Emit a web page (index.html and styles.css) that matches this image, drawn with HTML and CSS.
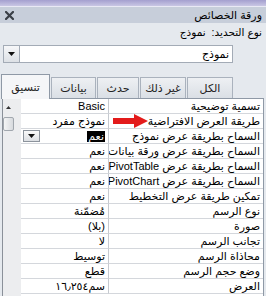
FILE: index.html
```html
<!DOCTYPE html>
<html lang="ar" dir="rtl">
<head>
<meta charset="utf-8">
<title>ورقة الخصائص</title>
<link rel="stylesheet" href="styles.css">
</head>
<body>
<div class="panel">
  <div class="topband"></div>
  <div class="titlebar">
    <span class="title">ورقة الخصائص</span>
    <span class="close"><svg width="9" height="9" viewBox="0 0 9 9"><path d="M1 1L8 8M8 1L1 8" stroke="#3a3f47" stroke-width="2.2" stroke-linecap="square"/></svg></span>
  </div>
  <div class="seltype">نوع التحديد:&nbsp; نموذج</div>
  <div class="combo">
    <span class="combo-text">نموذج</span>
    <span class="combo-btn"><svg width="7" height="4" viewBox="0 0 7 4"><path d="M0 0H7L3.5 4Z" fill="#111"/></svg></span>
  </div>
  <div class="tabs">
    <div class="tab">الكل</div>
    <div class="tab">غير ذلك</div>
    <div class="tab">حدث</div>
    <div class="tab">بيانات</div>
    <div class="tab active">تنسيق</div>
  </div>
  <div class="sheet">
    <div class="props">
      <div class="cell name">تسمية توضيحية</div><div class="cell val">Basic</div>
      <div class="cell name">طريقة العرض الافتراضية</div><div class="cell val">نموذج مفرد</div>
      <div class="cell name">السماح بطريقة عرض نموذج</div><div class="cell val sel"><span class="hl">نعم</span><span class="drop"><svg width="7" height="4" viewBox="0 0 7 4"><path d="M0 0H7L3.5 4Z" fill="#111"/></svg></span></div>
      <div class="cell name">السماح بطريقة عرض ورقة بيانات</div><div class="cell val">نعم</div>
      <div class="cell name">السماح بطريقة عرض PivotTable</div><div class="cell val">نعم</div>
      <div class="cell name">السماح بطريقة عرض PivotChart</div><div class="cell val">نعم</div>
      <div class="cell name">تمكين طريقة عرض التخطيط</div><div class="cell val">نعم</div>
      <div class="cell name">نوع الرسم</div><div class="cell val">مُضمّنة</div>
      <div class="cell name">صورة</div><div class="cell val">(بلا)</div>
      <div class="cell name">تجانب الرسم</div><div class="cell val">لا</div>
      <div class="cell name">محاذاة الرسم</div><div class="cell val">توسيط</div>
      <div class="cell name">وضع حجم الرسم</div><div class="cell val">قطع</div>
      <div class="cell name">العرض</div><div class="cell val">سم١٦٫٢٥٤</div>
    </div>
    <div class="scroll">
      <span class="up"><svg width="5" height="3" viewBox="0 0 5 3"><path d="M0 3H5L2.5 0Z" fill="#333"/></svg></span>
      <span class="thumb"></span>
    </div>
    <svg class="arrow" width="36" height="14" viewBox="0 0 36 14"><path d="M0 4H21V0L35 7L21 14V10H0Z" fill="#e31b1b"/></svg>
  </div>
</div>
</body>
</html>
```
FILE: styles.css
```css
html, body {
  margin: 0;
  padding: 0;
}
body {
  width: 266px;
  height: 296px;
  overflow: hidden;
  background: #e5e9ee;
  font-family: "Liberation Sans", "DejaVu Sans", sans-serif;
  font-size: 11px;
  color: #000;
}
.panel {
  direction: rtl;
  display: flex;
  flex-direction: column;
  height: 296px;
}
.topband {
  height: 6px;
  background: linear-gradient(#a49fcf, #c9c6e4);
  border-bottom: 1px solid #e9e9f4;
}
.titlebar {
  height: 16px;
  background: #c7ceda;
  display: flex;
  justify-content: space-between;
  align-items: center;
  padding: 0 4px 0 5px;
}
.title {
  font-size: 11px;
  line-height: 16px;
}
.close {
  display: flex;
}
.seltype {
  height: 19px;
  line-height: 19px;
  padding-right: 4px;
  font-size: 10.5px;
}
.combo {
  margin-top: 3px;
  margin-right: 33px;
  width: 230px;
  height: 18px;
  box-sizing: border-box;
  border: 1px solid #a3abb6;
  background: #fff;
  display: flex;
  justify-content: space-between;
  align-items: center;
}
.combo-text {
  padding-right: 3px;
  line-height: 16px;
}
.combo-btn {
  width: 16px;
  height: 16px;
  box-sizing: border-box;
  border-right: 1px solid #a3abb6;
  background: linear-gradient(#f6f7f9, #dde1e6);
  display: flex;
  align-items: center;
  justify-content: center;
}
.tabs {
  margin-top: 10px;
  height: 25px;
  display: flex;
  align-items: flex-end;
  padding-right: 33px;
  gap: 1px;
}
.tab {
  height: 21px;
  box-sizing: border-box;
  border: 1px solid #aab2bd;
  border-bottom: none;
  background: linear-gradient(#eef0f3, #dadfe5);
  display: flex;
  align-items: center;
  justify-content: center;
  width: 46px;
  color: #222;
}
.tab:nth-child(3) { width: 42px; }
.tab:nth-child(4) { width: 45px; }
.tab.active {
  height: 25px;
  width: 49px;
  background: #f5f6f8;
  border-color: #8f99a6;
  margin-bottom: -1px;
  position: relative;
  z-index: 1;
  padding-top: 1px;
}
.sheet {
  position: relative;
  margin: 0 2px;
  border-top: 1px solid #8f99a6;
  border-right: 1px solid #8f99a6;
  display: flex;
  flex: 1;
  min-height: 0;
}
.props {
  display: grid;
  grid-template-columns: 155px 87px;
  grid-auto-rows: 15px;
  width: 242px;
  background: #fff;
}
.cell {
  box-sizing: border-box;
  border-bottom: 1px solid #d4d7dc;
  line-height: 14px;
  padding-right: 3px;
  white-space: nowrap;
  overflow: hidden;
}
.name {
  border-left: 1px solid #c6cad0;
}
.val {
  position: relative;
}
.sel {
  display: flex;
  justify-content: space-between;
  align-items: center;
}
.hl {
  background: #000;
  color: #fff;
  line-height: 11px;
  height: 11px;
  padding: 0 1px;
}
.drop {
  width: 17px;
  height: 12px;
  box-sizing: border-box;
  border: 1px solid #8c939c;
  background: linear-gradient(#fafafa, #dcdfe3);
  display: flex;
  align-items: center;
  justify-content: center;
  margin-left: 2px;
}
.scroll {
  width: 19px;
  box-sizing: border-box;
  border-left: 1px solid #8a9099;
  background: #ecedef;
  display: flex;
  flex-direction: column;
  align-items: flex-end;
  padding-right: 1px;
}
.up {
  display: flex;
  width: 11px;
  justify-content: center;
  margin-top: 7px;
  height: 11px;
}
.thumb {
  display: block;
  width: 11px;
  height: 14px;
  box-sizing: border-box;
  border: 1px solid #a1a7ae;
  border-radius: 2px;
  background: linear-gradient(90deg, #f4f5f6, #d7dade);
}
.arrow {
  position: absolute;
  left: 111px;
  top: 15px;
}
```
